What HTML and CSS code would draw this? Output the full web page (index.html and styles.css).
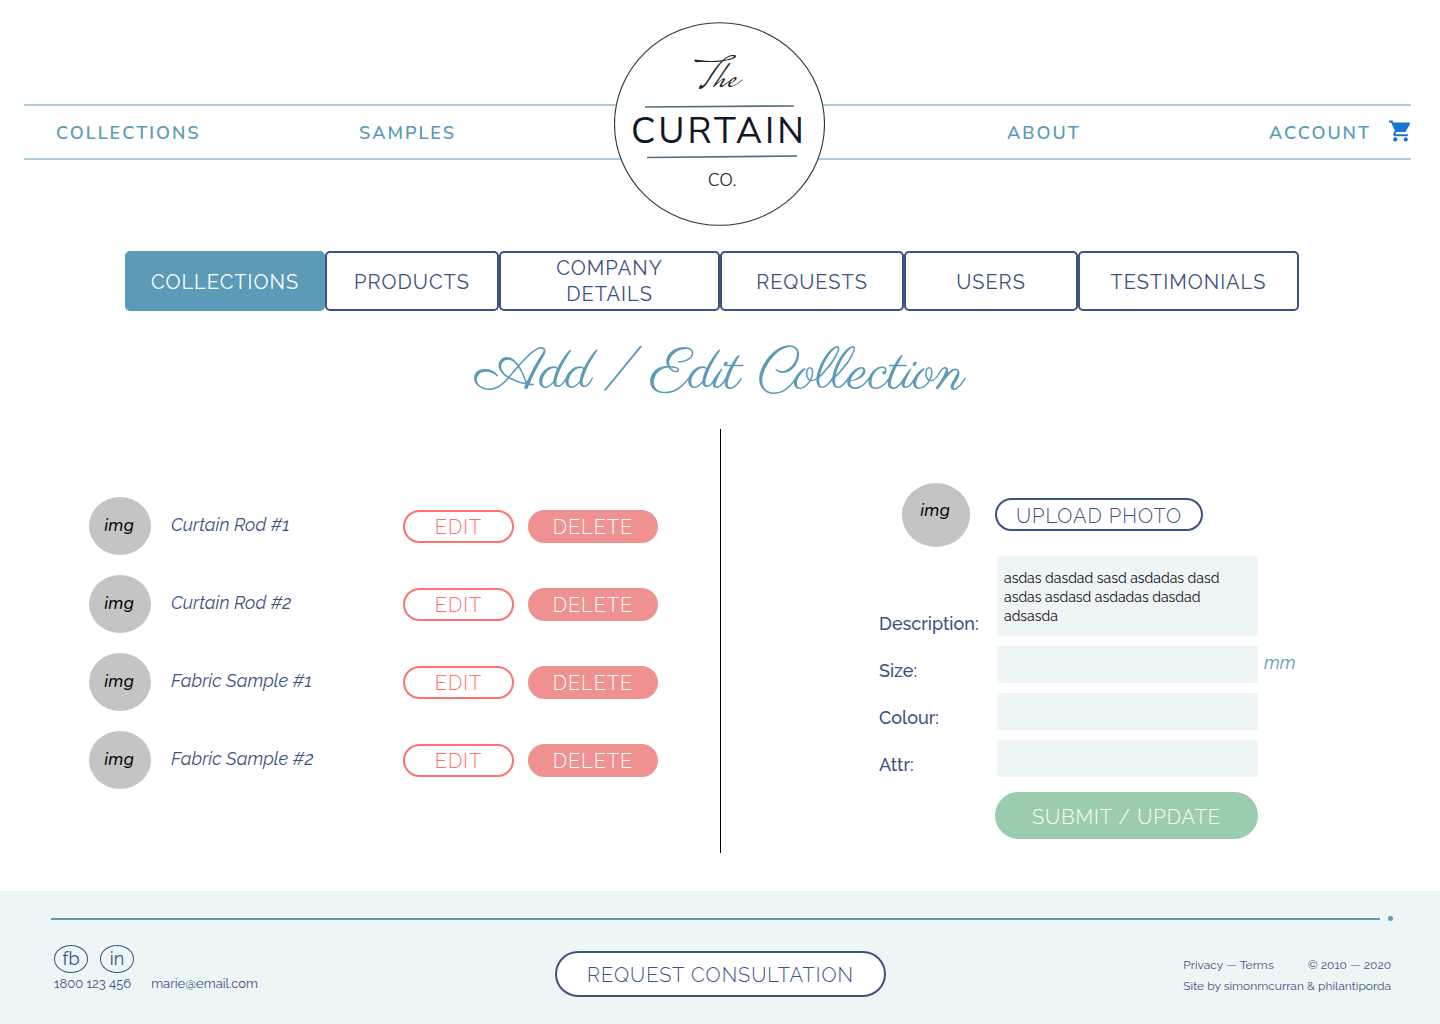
FILE: index.html
```html
<!DOCTYPE html>
<html lang="en">
<head>
<meta charset="utf-8">
<meta name="viewport" content="width=device-width, initial-scale=1">
<title>Add / Edit Collection – The Curtain Co.</title>
<link rel="stylesheet" href="styles.css">
</head>
<body>
<header class="site-header">
  <nav class="site-nav" aria-label="Main">
    <div class="nav-side nav-left">
      <a href="#collections">COLLECTIONS</a>
      <a href="#samples">SAMPLES</a>
    </div>
    <a class="logo" href="#home" aria-label="The Curtain Co.">
      <svg width="211" height="204" viewBox="0 0 211 204">
        <ellipse cx="105.5" cy="102" rx="105" ry="101.3" fill="#fff" stroke="#333" stroke-width="1.1"/>
        <text class="logo-the" x="82" y="65">The</text>
        <path d="M31 85L180 84M33 135.500L183 134" stroke="#4f6f80" stroke-width="1.700"/>
        <text class="logo-name" x="105" y="121" text-anchor="middle">CURTAIN</text>
        <text class="logo-co" x="108" y="164" text-anchor="middle">CO.</text>
      </svg>
    </a>
    <div class="nav-side nav-right">
      <a href="#about">ABOUT</a>
      <div class="account">
        <a href="#account">ACCOUNT</a>
        <a class="cart" href="#cart" aria-label="Cart">
          <svg width="22" height="22" viewBox="1 2 21 20"><path fill="#1976d2" d="M7 18c-1.100 0-1.990.9-1.990 2S5.900 22 7 22s2-.9 2-2-.9-2-2-2zM1 2v2h2l3.600 7.590-1.350 2.450c-.16.280-.25.610-.25.960 0 1.100.9 2 2 2h12v-2H7.420c-.14 0-.25-.11-.25-.25l.03-.12.900-1.630h7.450c.75 0 1.410-.41 1.750-1.030l3.580-6.490A1 1 0 0 0 20 4H5.210l-.94-2H1zm16 16c-1.100 0-1.990.9-1.990 2s.89 2 1.990 2 2-.9 2-2-.9-2-2-2z"/></svg>
        </a>
      </div>
    </div>
  </nav>
</header>

<main>
  <div class="tabs">
    <button type="button" class="tab active">COLLECTIONS</button>
    <button type="button" class="tab">PRODUCTS</button>
    <button type="button" class="tab tab-wrap">COMPANY DETAILS</button>
    <button type="button" class="tab">REQUESTS</button>
    <button type="button" class="tab">USERS</button>
    <button type="button" class="tab">TESTIMONIALS</button>
  </div>

  <h1>Add / Edit Collection</h1>

  <div class="panels">
    <ul class="items">
      <li><span class="thumb">img</span><span class="name">Curtain Rod #1</span><button type="button" class="pill edit">EDIT</button><button type="button" class="pill delete">DELETE</button></li>
      <li><span class="thumb">img</span><span class="name">Curtain Rod #2</span><button type="button" class="pill edit">EDIT</button><button type="button" class="pill delete">DELETE</button></li>
      <li><span class="thumb">img</span><span class="name">Fabric Sample #1</span><button type="button" class="pill edit">EDIT</button><button type="button" class="pill delete">DELETE</button></li>
      <li><span class="thumb">img</span><span class="name">Fabric Sample #2</span><button type="button" class="pill edit">EDIT</button><button type="button" class="pill delete">DELETE</button></li>
    </ul>

    <form class="editor">
      <span class="thumb thumb-large">img</span>
      <button type="button" class="pill upload">UPLOAD PHOTO</button>
      <label for="description">Description:</label>
      <textarea id="description">asdas dasdad sasd asdadas dasd asdas asdasd asdadas dasdad adsasda</textarea>
      <label for="size">Size:</label>
      <input id="size" type="text">
      <span class="unit">mm</span>
      <label for="colour">Colour:</label>
      <input id="colour" type="text">
      <label for="attr">Attr:</label>
      <input id="attr" type="text">
      <button type="submit" class="pill submit">SUBMIT / UPDATE</button>
    </form>
  </div>
</main>

<footer class="site-footer">
  <div class="rule"><span class="line"></span><span class="dot"></span></div>
  <div class="footer-row">
    <div class="contact">
      <div class="social"><a href="#fb">fb</a><a href="#in">in</a></div>
      <div class="details"><a href="tel:1800123456">1800 123 456</a><a href="mailto:marie@email.com">marie@email.com</a></div>
    </div>
    <button type="button" class="pill request">REQUEST CONSULTATION</button>
    <div class="legal">
      <div class="legal-top"><span><a href="#privacy">Privacy</a> — <a href="#terms">Terms</a></span><span>© 2010 — 2020</span></div>
      <div>Site by simonmcurran &amp; philantiporda</div>
    </div>
  </div>
</footer>
</body>
</html>
```
FILE: styles.css
```css
:root {
  --teal: #5b9bb8;
  --navy: #3c5280;
  --pale: #edf5f7;
  --sans: Raleway, Lato, "Open Sans", sans-serif;
  --round: Nunito, Lato, "Open Sans", sans-serif;
}

* { box-sizing: border-box; }

body {
  margin: 0;
  min-height: 100vh;
  display: flex;
  flex-direction: column;
  background: #fff;
  color: var(--navy);
  font-family: var(--sans);
  font-size: 18px;
}

a { color: inherit; text-decoration: none; }
button, input, textarea { font: inherit; color: inherit; }
button { cursor: pointer; padding: 0; }

/* Header */
.site-header { padding: 104px 29px 0 24px; }

.site-nav {
  display: grid;
  grid-template-columns: 1fr 211px 1fr;
  align-items: center;
  height: 56px;
  padding-left: 4px;
  border-top: 2px solid #a9cddb;
  border-bottom: 2px solid #a9cddb;
  color: var(--teal);
  font: 600 18px var(--round);
  letter-spacing: 2px;
}

.nav-side { display: flex; justify-content: space-between; align-items: center; padding-top: 2px; }
.nav-left { padding-left: 28px; padding-right: 158px; }
.nav-right { padding-left: 182px; }
.account { display: flex; align-items: center; gap: 18px; }
.cart { padding-bottom: 4px; }
.cart svg, .logo svg { display: block; }
.logo { margin: -84px 0 -68px; }
.logo-the { font: 400 42px "Mrs Saint Delafield", "Mr De Haviland", "Herr Von Muellerhoff", Allura, "Great Vibes", cursive; letter-spacing: 0; fill: #222; }
.logo-name { font: 400 36px "Nunito Sans", Nunito, Lato, sans-serif; letter-spacing: 3px; fill: #101828; }
.logo-co { font: 300 18px "Nunito Sans", Nunito, Lato, sans-serif; letter-spacing: 0; fill: #111; }

/* Section tabs */
.tabs {
  display: grid;
  grid-template-columns: 200fr 174fr 221fr 184fr 174fr 221fr;
  max-width: 1190px;
  margin: 91px auto 0;
  padding-right: 16px;
}

.tab {
  height: 60px;
  padding-top: 2px;
  border: 2px solid var(--navy);
  border-radius: 5px;
  background: #fff;
  color: var(--navy);
  font-size: 20px;
  font-weight: 400;
  line-height: 26px;
  letter-spacing: 1px;
}

.tab-wrap { padding: 0 40px; }
.tab.active { background: var(--teal); border-color: var(--teal); color: #fff; }

h1 {
  margin: 32px 0 0;
  color: var(--teal);
  font: 400 58px/64px Parisienne, "Petit Formal Script", "Liberation Serif", cursive;
  text-align: center;
}

/* Panels */
.panels {
  display: grid;
  grid-template-columns: 1fr 1fr;
  margin-top: 22px;
  min-height: 424px;
}

.items {
  display: flex;
  flex-direction: column;
  gap: 20px;
  margin: 0;
  padding: 68px 62px 0 89px;
  list-style: none;
}

.items li { display: flex; align-items: center; }

.thumb {
  display: flex;
  align-items: center;
  justify-content: center;
  width: 62px;
  height: 58px;
  padding: 0 2px 2px 0;
  border-radius: 50%;
  background: #c4c4c4;
  color: #000;
  font: italic 400 18px var(--round);
}

.name { flex: 1; padding: 0 0 4px 20px; font-style: italic; }

.pill {
  height: 33px;
  padding-top: 1px;
  border: 2px solid var(--navy);
  border-radius: 24px;
  background: #fff;
  color: var(--navy);
  font-size: 20px;
  font-weight: 300;
  letter-spacing: 1px;
}

.edit { width: 111px; border-color: #ff7070; color: #ff7070; }
.delete { width: 130px; margin-left: 14px; border-color: #f09191; background: #f09191; color: #fff; }

.editor {
  display: grid;
  grid-template-columns: 112px 263px 1fr;
  grid-template-rows: 63px;
  column-gap: 4px;
  row-gap: 10px;
  align-content: start;
  padding: 54px 20px 0 158px;
  border-left: 1px solid #000;
}

.thumb-large { width: 68px; height: 64px; margin-left: 23px; padding-bottom: 10px; }
.upload { width: 208px; align-self: center; padding-top: 2px; }
.editor label { grid-column: 1; align-self: end; font-weight: 500; line-height: 24px; }

.editor textarea, .editor input {
  grid-column: 2;
  justify-self: end;
  width: 261px;
  height: 37px;
  margin: 0;
  padding: 0 7px;
  border: 0;
  border-radius: 0;
  background: var(--pale);
  color: #111;
  font-size: 14px;
}

.editor textarea {
  display: block;
  height: 80px;
  padding: 13px 30px 0 7px;
  line-height: 19px;
  resize: none;
}

.unit { align-self: center; padding: 0 0 4px 2px; color: var(--teal); font-style: italic; }
.submit { grid-column: 2; height: 47px; margin-top: 5px; padding-top: 3px; border-color: #9bccae; background: #9bccae; color: #fff; }

/* Footer */
.site-footer {
  flex: 1;
  margin-top: 38px;
  padding: 25px 47px 27px 51px;
  background: var(--pale);
}

.rule { display: flex; align-items: center; gap: 8px; height: 5px; }
.line { flex: 1; height: 2px; background: var(--teal); }
.dot { width: 5px; height: 5px; border-radius: 50%; background: var(--teal); }

.footer-row {
  display: grid;
  grid-template-columns: 501fr 331px 505fr;
  align-items: center;
  margin-top: 22px;
  padding: 0 2px 0 3px;
  font-size: 13px;
}

.social { display: flex; gap: 12px; }

.social a {
  display: flex;
  align-items: center;
  justify-content: center;
  width: 34px;
  height: 28px;
  padding-bottom: 2px;
  border: 1px solid var(--navy);
  border-radius: 50%;
  font: 400 18px var(--sans);
}

.details { display: flex; gap: 20px; line-height: 22px; }
.request { height: 46px; margin-top: 8px; }
.legal { justify-self: end; margin-top: 12px; font-size: 12px; line-height: 21px; }
.legal-top { display: flex; justify-content: space-between; }
```
